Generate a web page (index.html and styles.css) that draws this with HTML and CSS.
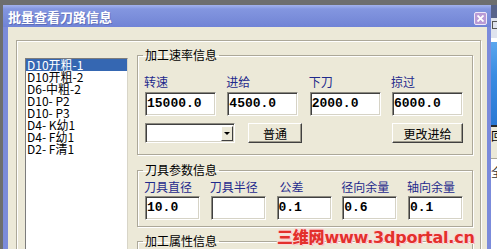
FILE: index.html
```html
<!DOCTYPE html>
<html lang="zh-CN">
<head>
  <meta charset="UTF-8" />
  <title>批量查看刀路信息</title>
  <link rel="stylesheet" href="styles.css">
</head>
<body>

  <div class="screen">
    <!-- Dialog window -->
    <div class="window">
      <div class="titlebar">
        <span class="title">批量查看刀路信息</span>
        <span class="close">
          <svg width="7" height="7" viewBox="0 0 7 7"><path d="M0.5 0.5L6.5 6.5M6.5 0.5L0.5 6.5" stroke="#fff" stroke-width="1.8"/></svg>
        </span>
      </div>

      <div class="frame">
        <div class="panel">
          <ul class="list">
            <li class="sel">D10开粗-1</li>
            <li>D10开粗-2</li>
            <li>D6-中粗-2</li>
            <li>D10- P2</li>
            <li>D10- P3</li>
            <li>D4- K幼1</li>
            <li>D4- F幼1</li>
            <li>D2- F清1</li>
          </ul>

          <div class="groups">
            <fieldset class="group speed">
              <legend>加工速率信息</legend>
              <div class="cols cols4">
                <div class="field"><label>转速</label><div class="edit">15000.0</div></div>
                <div class="field"><label>进给</label><div class="edit">4500.0</div></div>
                <div class="field"><label>下刀</label><div class="edit">2000.0</div></div>
                <div class="field"><label>掠过</label><div class="edit">6000.0</div></div>
              </div>
              <div class="actions">
                <div class="combo"><span class="drop"></span></div>
                <button class="btn">普通</button>
                <button class="btn btn-wide">更改进给</button>
              </div>
            </fieldset>

            <fieldset class="group tool">
              <legend>刀具参数信息</legend>
              <div class="cols cols5">
                <div class="field"><label>刀具直径</label><div class="edit">10.0</div></div>
                <div class="field"><label>刀具半径</label><div class="edit"></div></div>
                <div class="field"><label class="nudge">公差</label><div class="edit">0.1</div></div>
                <div class="field"><label>径向余量</label><div class="edit">0.6</div></div>
                <div class="field"><label>轴向余量</label><div class="edit">0.1</div></div>
              </div>
            </fieldset>

            <fieldset class="group props">
              <legend>加工属性信息</legend>
            </fieldset>
          </div>
        </div>

        <div class="watermark"><span class="wm-cn">三维网</span>www.3dportal.cn</div>
      </div>
    </div>

    <!-- window behind, visible at the right edge -->
    <div class="behind">
      <div class="bh-dark"></div>
      <div class="bh-light"><span class="bh-box"></span></div>
      <div class="bh-white"></div>
      <div class="bh-blue"></div>
      <div class="bh-line"></div>
      <div class="bh-beige">回</div>
      <div class="bh-page">全</div>
    </div>
  </div>

</body>
</html>
```

FILE: styles.css
```css
* {
  margin: 0;
  padding: 0;
  box-sizing: border-box;
}

body {
  width: 497px;
  height: 249px;
  overflow: hidden;
  background: #6d6e6e;
  font-family: "Noto Sans CJK SC", "Liberation Sans", sans-serif;
  font-size: 12px;
  color: #000;
}

.screen {
  display: flex;
  height: 249px;
  padding: 5px 0 0 3px;
}

.window {
  width: 488px;
  display: flex;
  flex-direction: column;
}

.titlebar {
  height: 22px;
  display: flex;
  justify-content: space-between;
  align-items: flex-start;
  padding: 0 4px 0 5px;
  background: linear-gradient(#a3b2ec, #8396e0 18%, #7a8dda 60%, #7083d6);
}

.title {
  color: #fff;
  font-weight: 700;
  font-size: 13px;
  line-height: 22px;
  padding-top: 1px;
  text-shadow: 1px 1px 0 rgba(70, 80, 150, 0.45);
}

.close {
  margin-top: 7px;
  width: 13px;
  height: 13px;
  border: 1px solid #efe8f8;
  border-radius: 2px;
  background: #b99bd6;
  display: flex;
  align-items: center;
  justify-content: center;
}

.frame {
  position: relative;
  flex: 1;
  overflow: hidden;
  background: #ece9d8;
  border-left: 5px solid #7b8bdb;
  border-right: 4px solid #7b8bdb;
}

/* etched outer panel */
.panel {
  display: flex;
  align-items: flex-start;
  margin: 13px 6px 0 8px;
  padding: 7px 7px 0 8px;
  height: 260px;
  border: 1px solid #aca899;
  box-shadow: inset 1px 1px #fff, 1px 1px #fff;
}

.list {
  list-style: none;
  width: 103px;
  height: 200px;
  margin: 10px 9px 0 0;
  background: #fff;
  border: 1px solid #7c7c7c;
  border-right-color: #d8d5c8;
  border-bottom-color: #d8d5c8;
}

.list li {
  height: 12px;
  line-height: 12px;
  padding-left: 1px;
  white-space: nowrap;
}

.list li.sel {
  background: #3567b2;
  color: #fff;
}

.groups {
  flex: 1;
  display: flex;
  flex-direction: column;
}

.group {
  border: 1px solid #aca899;
  box-shadow: inset 1px 1px #fff, 1px 1px #fff;
  padding: 0 9px 0 7px;
}

.group legend {
  line-height: 14px;
  padding: 0 2px;
  margin-left: -2px;
}

.speed {
  padding-top: 13px;
  padding-bottom: 11px;
}

.tool {
  margin-top: 8px;
  padding-top: 3px;
  padding-bottom: 6px;
}

.props {
  margin-top: 7px;
  height: 40px;
}

.cols {
  display: flex;
  justify-content: space-between;
}

.field label {
  display: block;
  line-height: 14px;
  color: #1f2a8c;
  margin-left: -1px;
}

.field label.nudge {
  margin-left: 3px;
}

.edit {
  height: 24px;
  padding-left: 1px;
  background: #fff;
  border: 1px solid;
  border-color: #8c8a80 #fff #fff #8c8a80;
  box-shadow: inset 1px 1px #404040, inset -1px -1px #d6d3c6;
  font-family: "Liberation Mono", monospace;
  font-weight: 700;
  font-size: 13px;
  line-height: 22px;
}

.cols4 .field {
  width: 71px;
}

.cols4 .field label {
  margin-bottom: 3px;
}

.cols5 .field {
  width: 55px;
}

.cols5 .field label {
  margin-bottom: 2px;
}

.actions {
  display: flex;
  align-items: center;
  margin-top: 7px;
  height: 20px;
}

.combo {
  width: 90px;
  height: 20px;
  display: flex;
  justify-content: flex-end;
  align-items: center;
  padding-right: 1px;
  background: #fff;
  border: 1px solid;
  border-color: #8c8a80 #fff #fff #8c8a80;
  box-shadow: inset 1px 1px #404040, inset -1px -1px #d6d3c6;
}

.drop {
  width: 12px;
  height: 15px;
  background: #ece9d8;
  border: 1px solid;
  border-color: #fff #404040 #404040 #fff;
  display: flex;
  align-items: center;
  justify-content: center;
}

.drop::after {
  content: "";
  border-left: 3px solid transparent;
  border-right: 3px solid transparent;
  border-top: 3px solid #000;
}

.btn {
  height: 20px;
  width: 54px;
  margin-left: 13px;
  font-family: inherit;
  font-size: 12px;
  color: #000;
  background: #ece9d8;
  border: 1px solid;
  border-color: #fff #404040 #404040 #fff;
  box-shadow: inset -1px -1px #9d9a8c;
}

.btn-wide {
  width: 71px;
  margin-left: auto;
}

.watermark {
  position: absolute;
  left: 269px;
  top: 200px;
  font-family: "DejaVu Sans", sans-serif;
  font-weight: 700;
  font-size: 16px;
  line-height: 18px;
  letter-spacing: -0.2px;
  color: #e3302c;
  white-space: nowrap;
  text-shadow: 1px 0 #fbd9d9, -1px 0 #fbd9d9, 0 1px #fbd9d9, 0 -1px #fbd9d9,
    1px 1px #f3b0b0, -1px -1px #fbd9d9;
}

.wm-cn {
  font-family: "Noto Sans CJK SC", sans-serif;
  font-weight: 900;
}

/* strip of the window behind */
.behind {
  flex: 1;
  display: flex;
  flex-direction: column;
  overflow: hidden;
  font-size: 12px;
}

.bh-dark {
  height: 13px;
  background: #56628a;
}

.bh-light {
  height: 20px;
  background: #dfe3ee;
  padding: 3px 0 0 1px;
}

.bh-box {
  display: block;
  width: 8px;
  height: 8px;
  border: 1px solid #555;
}

.bh-white {
  height: 4px;
  background: #fff;
}

.bh-blue {
  height: 83px;
  background: linear-gradient(#5aa6ee, #3a8ce2 40%, #2a78d4);
}

.bh-line {
  height: 2px;
  background: #2a2a2a;
}

.bh-beige {
  height: 31px;
  background: #ece9d8;
  padding-top: 2px;
  line-height: 14px;
}

.bh-page {
  flex: 1;
  background: #fff;
  border-top: 1px solid #aca899;
  padding-top: 6px;
  line-height: 14px;
  color: #333;
}
```
